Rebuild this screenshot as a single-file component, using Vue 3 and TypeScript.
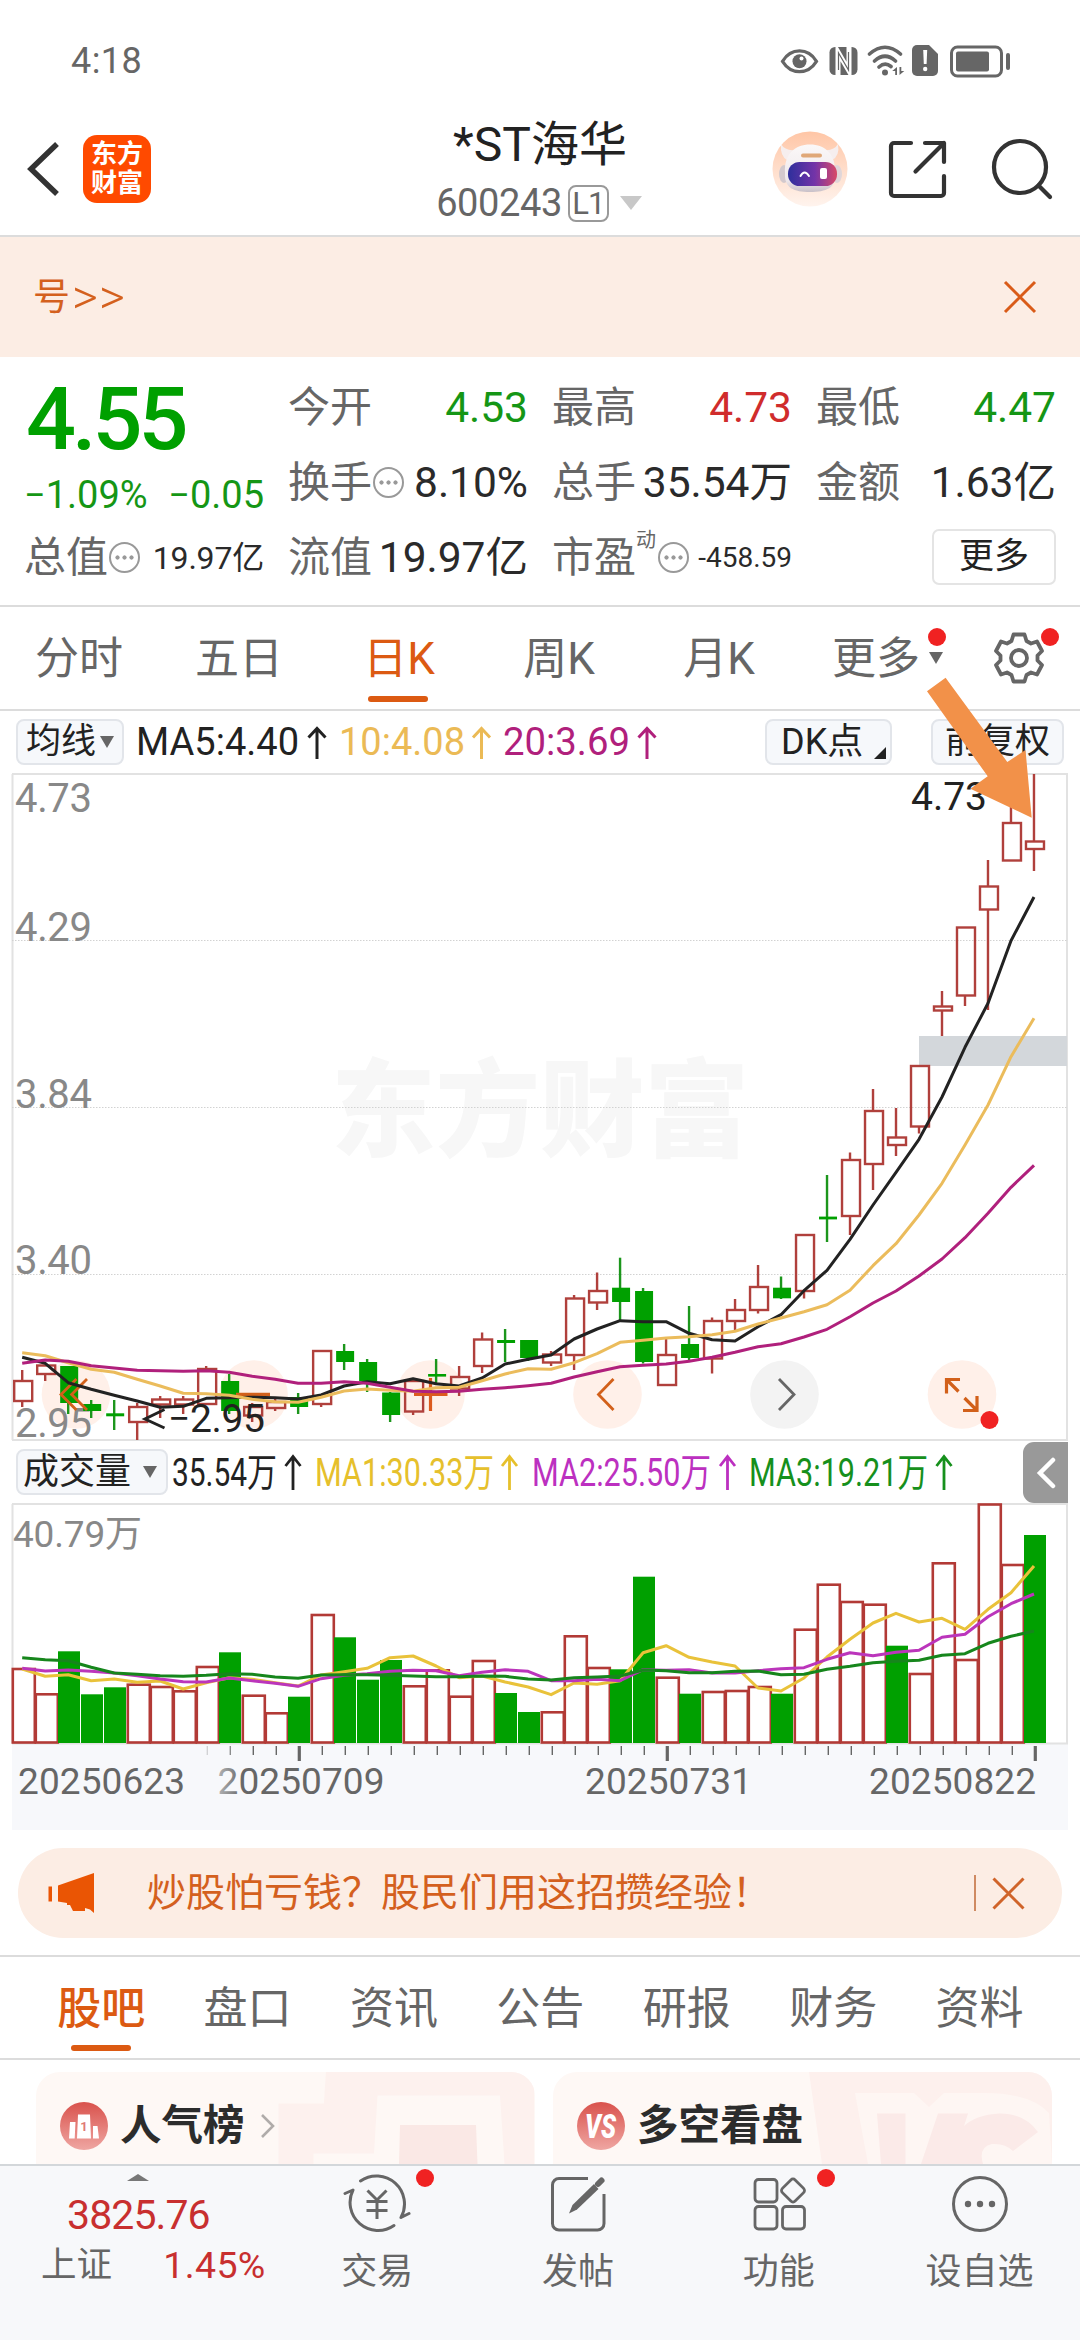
<script setup lang="ts">
type Candle = [kind: 'r' | 'g', high: number, top: number, bottom: number, low: number]

const PITCH = 22.995
const cx = (i: number): number => 22.2 + i * PITCH

const candles: Candle[] = [
  ['r', 1370, 1381, 1401, 1407], ['r', 1365, 1365.5, 1374, 1381], ['g', 1366, 1366, 1403, 1414],
  ['g', 1400, 1404, 1411, 1418], ['g', 1400, 1413.3, 1416.3, 1430], ['r', 1403, 1407, 1422, 1440],
  ['r', 1396, 1399.5, 1404.5, 1418], ['r', 1396, 1399.5, 1404.5, 1414], ['r', 1366, 1369, 1404, 1404],
  ['g', 1374, 1381, 1411, 1414], ['r', 1403, 1407, 1415.5, 1422], ['r', 1398, 1402, 1408, 1411],
  ['g', 1393, 1397, 1407, 1414], ['r', 1351, 1351, 1404, 1407], ['g', 1344, 1351, 1362, 1370],
  ['g', 1359, 1362, 1381, 1392], ['g', 1392, 1392.5, 1415, 1422], ['r', 1381, 1381, 1411.5, 1415],
  ['g', 1359, 1374, 1376.6, 1385], ['r', 1366, 1377, 1388.5, 1396], ['r', 1332.5, 1339.5, 1366, 1373],
  ['g', 1329, 1340, 1343, 1362], ['g', 1340, 1340, 1358, 1361], ['r', 1351, 1354.5, 1362.5, 1366],
  ['r', 1295, 1298.5, 1355, 1370], ['r', 1272.5, 1291, 1302.5, 1310], ['g', 1257.7, 1287.7, 1302, 1321],
  ['g', 1288, 1291, 1362, 1363.5], ['r', 1337, 1355, 1385, 1385], ['g', 1306, 1344, 1358, 1361],
  ['r', 1317.5, 1321, 1358.5, 1373.5], ['r', 1299, 1310, 1321, 1331], ['r', 1265, 1287, 1310, 1313.5],
  ['g', 1276.5, 1287.7, 1298.3, 1299], ['r', 1235, 1235, 1291, 1298.5], ['g', 1175, 1216.6, 1219.4, 1242],
  ['r', 1152.5, 1160, 1216, 1235], ['r', 1089, 1111, 1164, 1190], ['r', 1108, 1137.5, 1145, 1156],
  ['r', 1066, 1066, 1126.5, 1133.5], ['r', 991, 1006.5, 1010.5, 1036], ['r', 927.5, 927.5, 995.5, 1006],
  ['r', 860, 886.5, 909.5, 1010], ['r', 800, 823, 860.5, 860.5], ['r', 774, 841.5, 849, 871],
]

const ma5 = [1357.3, 1363.3, 1382.7, 1389.3, 1395.3, 1401, 1407.3, 1406.3, 1398.3, 1397.7, 1397.3, 1397.7, 1399, 1395, 1386, 1381.7, 1383.7, 1378.7, 1383.7, 1386, 1378, 1364, 1359.3, 1355, 1339, 1329, 1320.7, 1321.7, 1321.7, 1333.3, 1339.7, 1341, 1326.7, 1314.7, 1290.7, 1270.3, 1239.3, 1205, 1172.3, 1139.3, 1097, 1047.3, 1003.3, 940.7, 897]
const ma10 = [1352.7, 1355.7, 1362.7, 1369.3, 1372.3, 1379.3, 1386, 1393.3, 1393.7, 1395.3, 1399.3, 1401.7, 1402.3, 1397.3, 1391, 1389, 1390.3, 1391.3, 1387.7, 1387.3, 1380.7, 1374, 1368.7, 1369.3, 1362.7, 1353.7, 1342.3, 1340.3, 1338, 1336.7, 1334.7, 1331.3, 1324, 1318, 1311.7, 1304.7, 1290.3, 1265.7, 1243.7, 1215, 1183.3, 1145, 1105, 1056.7, 1018.3]
const ma20 = [1363.3, 1360, 1361.3, 1365.7, 1368, 1370.3, 1370.7, 1371.3, 1370.7, 1372.3, 1376.3, 1379.3, 1383.3, 1383.3, 1381.7, 1383.3, 1387.3, 1391.3, 1391.7, 1391.3, 1389.3, 1387.7, 1385.7, 1383.3, 1377, 1371.7, 1366.7, 1365.3, 1364, 1361.3, 1357.3, 1352.3, 1346.7, 1343.7, 1337, 1329.3, 1316.7, 1303, 1291, 1276, 1259, 1237.7, 1213.3, 1187.3, 1165.3]

const volumeTops = [1669, 1694.3, 1651.3, 1694.3, 1687.3, 1684.7, 1687, 1691.3, 1667, 1652.3, 1695.7, 1713.3, 1696.7, 1615, 1637.3, 1679.7, 1660, 1686.3, 1670.3, 1696.7, 1661, 1693, 1712, 1712.3, 1636.3, 1668, 1669.3, 1576.7, 1677.7, 1693.7, 1692, 1691, 1687, 1693.7, 1629.7, 1584.7, 1602, 1604.7, 1645.7, 1674, 1563.3, 1660, 1504.5, 1565, 1535]
const greenVolumes = new Set([2, 3, 4, 9, 12, 14, 15, 16, 21, 22, 26, 27, 29, 33, 38, 44])
const vma1 = [1669, 1676.3, 1674.7, 1680.7, 1679, 1682.3, 1681, 1689, 1682.7, 1677.7, 1679.3, 1682.7, 1686, 1675, 1671.7, 1668.3, 1657.7, 1656, 1666, 1677.7, 1676, 1682, 1687, 1694.7, 1683, 1684.3, 1680.7, 1652.7, 1645.7, 1657.3, 1662, 1666, 1688, 1691, 1678, 1657, 1639.3, 1623, 1613.3, 1622, 1618.3, 1629.3, 1609.3, 1592.7, 1566]
const vma2 = [1668.3, 1671, 1670, 1671.3, 1673, 1675.7, 1679, 1681.7, 1682, 1678, 1680.7, 1683.3, 1686.3, 1678.7, 1675.3, 1673.7, 1671.3, 1670.3, 1670.7, 1675.7, 1672.3, 1669.7, 1671.3, 1680.7, 1680.7, 1679.3, 1680.7, 1669.7, 1670.3, 1669.7, 1673, 1673, 1670.7, 1668.7, 1667.7, 1659.3, 1652.7, 1655.7, 1652.3, 1650.3, 1637.3, 1634.3, 1616.7, 1603.7, 1594]
const vma3 = [1657.7, 1659.7, 1660.7, 1667.3, 1673, 1674.3, 1675.7, 1676.3, 1675.3, 1673.7, 1674.3, 1677, 1678.3, 1675, 1674.7, 1674.7, 1675.3, 1676, 1676.7, 1676.7, 1676, 1676.3, 1679, 1680, 1677.7, 1677, 1676, 1670, 1670.7, 1672.7, 1672.7, 1671.3, 1671, 1674.7, 1674.3, 1669.3, 1666.3, 1662.7, 1661.3, 1660.3, 1655.3, 1653.7, 1643.3, 1636.3, 1631]

const line = (ys: number[]): string => ys.map((y, i) => `${cx(i).toFixed(1)},${y}`).join(' ')

const ticks = Array.from({ length: 37 }, (_, k) => k + 8).map((i) => ({
  x: 23.3 + i * 23,
  major: i === 12 || i === 28 || i === 44,
}))

const priceLabels = [
  { t: '4.73', y: 811.5 }, { t: '4.29', y: 940.5 }, { t: '3.84', y: 1107.5 },
  { t: '3.40', y: 1273.5 }, { t: '2.95', y: 1436.5 },
]
const dates = [
  { t: '20250623', x: 18 }, { t: '20250709', x: 217.5 }, { t: '20250731', x: 585 }, { t: '20250822', x: 869 },
]
const maLegend = [
  { t: 'MA5:4.40', x: 136, w: 163, a: 317, c: '#222' },
  { t: '10:4.08', x: 339, w: 126, a: 481.5, c: '#ebba55' },
  { t: '20:3.69', x: 503, w: 127, a: 647, c: '#b0207c' },
]
const volLegend = [
  { t: '35.54万', x: 172, w: 105, a: 293, c: '#222' },
  { t: 'MA1:30.33万', x: 315, w: 179, a: 509.5, c: '#e6c02c' },
  { t: 'MA2:25.50万', x: 532, w: 179, a: 727.5, c: '#bc30c0' },
  { t: 'MA3:19.21万', x: 749, w: 179, a: 944, c: '#16901c' },
]
const periods = ['分时', '五日', '日K', '周K', '月K']
const sections = ['股吧', '盘口', '资讯', '公告', '研报', '财务', '资料']
</script>

<template>
  <div class="app">
    <div class="status">
      <span class="clock">4:18</span>
      <svg class="status-icons" viewBox="776 40 240 42" width="240" height="42">
        <g fill="none" stroke="#666" stroke-width="3.2">
          <path d="M782.5 61.3C791 47.500 808 47.500 816.500 61.300C808 75 791 75 782.500 61.300Z" />
          <rect x="951.500" y="47" width="50" height="29" rx="6" stroke-width="3" />
          <g stroke-linecap="round" stroke-width="3.600">
            <path d="M869.500 54Q885 40.500 900.500 54M874.500 61Q885 51.500 895.500 61M879 67Q885 61.500 891 66.500" />
          </g>
        </g>
        <circle cx="799.500" cy="61.300" r="7" fill="#666" /><circle cx="801.500" cy="58.500" r="2" fill="#fff" />
        <rect x="829.500" y="47" width="28" height="28" rx="5.500" fill="#666" />
        <path d="M838 76V52L849 71V46" fill="none" stroke="#fff" stroke-width="5" />
        <path d="M838.500 70V53L848.500 70V52" fill="none" stroke="#666" stroke-width="1.200" />
        <circle cx="885" cy="72.500" r="3" fill="#666" />
        <path d="M897 67v8h-1.800v-4h-3zM899.500 75v-8h1.800v4h3z" fill="#666" />
        <path d="M917 45h12l9 9v17a5 5 0 0 1-5 5h-16a5 5 0 0 1-5-5V50a5 5 0 0 1 5-5z" fill="#666" />
        <path d="M923.200 50h4l-.6 14h-2.800z" fill="#fff" /><circle cx="925.200" cy="69" r="2.200" fill="#fff" />
        <rect x="956" y="51.500" width="33" height="20" rx="2" fill="#666" />
        <rect x="1006" y="53" width="4" height="17" rx="2" fill="#666" />
      </svg>
    </div>

    <header class="header">
      <div class="head-left">
        <svg width="34" height="58" viewBox="0 0 34 58"><path d="M31 4L5 29L31 54" fill="none" stroke="#333" stroke-width="5.500" /></svg>
        <div class="logo"><span>东方</span><span>财富</span></div>
      </div>
      <div class="head-title">
        <div class="name">*ST海华</div>
        <div class="code"><span class="code-num">600243</span><span class="level">L1</span><i class="tri"></i></div>
      </div>
      <div class="head-right">
        <svg width="76" height="76" viewBox="0 0 76 76">
          <defs>
            <linearGradient id="sky" x1="0" y1="0" x2="0" y2="1"><stop offset="0" stop-color="#ffc6a6" /><stop offset="1" stop-color="#fff4ee" /></linearGradient>
            <linearGradient id="visor" x1="0" y1="0" x2="1" y2="0"><stop offset="0" stop-color="#2e2f9c" /><stop offset=".55" stop-color="#7434a8" /><stop offset="1" stop-color="#d84a68" /></linearGradient>
            <linearGradient id="shell" x1="0" y1="0" x2="0" y2="1"><stop offset="0" stop-color="#fbf8f8" /><stop offset=".75" stop-color="#efe9ec" /><stop offset="1" stop-color="#c9c0c8" /></linearGradient>
          </defs>
          <circle cx="38" cy="38" r="37.500" fill="url(#sky)" />
          <path d="M9 13Q8 25 15 29L23 19Q13 20 9 13ZM66 13Q68 25 60 29L52 19Q62 20 66 13Z" fill="#f6eeee" />
          <ellipse cx="12" cy="43" rx="5" ry="9" fill="#d3c9cd" /><ellipse cx="65" cy="43" rx="5" ry="9" fill="#e0d6d9" />
          <path d="M13 42C12 23 23 13.500 38 13.500S64 23 63 42C65 57 54 61 38 61S12 57 13 42Z" fill="url(#shell)" />
          <rect x="29" y="22.500" width="21" height="4" rx="2" fill="#e0a878" />
          <rect x="16" y="31" width="49" height="24" rx="11.500" fill="url(#visor)" />
          <path d="M28.500 45Q32.500 38 37 45" fill="none" stroke="#fff" stroke-width="2" stroke-linecap="round" />
          <rect x="48" y="37" width="7" height="11" rx="2" fill="#fff" />
        </svg>
        <svg class="share" width="62" height="62" viewBox="0 0 62 62" fill="none" stroke="#333" stroke-width="4.200" stroke-linecap="round" stroke-linejoin="round">
          <path d="M25 5H8a3 3 0 0 0-3 3V55a3 3 0 0 0 3 3H55a3 3 0 0 0 3-3V38M39 5H58V24M58 5L29.500 33.500" />
        </svg>
        <svg class="search" width="64" height="64" viewBox="0 0 64 64" fill="none" stroke="#333" stroke-width="4.200" stroke-linecap="round">
          <circle cx="30" cy="30" r="26" /><path d="M48.500 48.500L60 60" />
        </svg>
      </div>
    </header>

    <div class="notice">
      <span>号<em>&gt;&gt;</em></span>
      <svg width="34" height="34" viewBox="0 0 34 34"><path d="M2 2L32 32M32 2L2 32" stroke="#d95b18" stroke-width="3" fill="none" /></svg>
    </div>

    <section class="quote">
      <div class="last">
        <div class="price">4.55</div>
        <div class="change"><span>−1.09%</span><span>−0.05</span></div>
      </div>
      <div class="cell"><label>今开</label><b class="down">4.53</b></div>
      <div class="cell"><label>最高</label><b class="up">4.73</b></div>
      <div class="cell"><label>最低</label><b class="down">4.47</b></div>
      <div class="cell"><label>换手<i class="more-dot"></i></label><b>8.10%</b></div>
      <div class="cell"><label>总手</label><b>35.54万</b></div>
      <div class="cell"><label>金额</label><b>1.63亿</b></div>
      <div class="cell"><label>总值<i class="more-dot"></i></label><b class="mid">19.97亿</b></div>
      <div class="cell"><label>流值</label><b>19.97亿</b></div>
      <div class="cell"><label>市盈<sup>动</sup><i class="more-dot"></i></label><b class="small">-458.59</b></div>
      <div class="cell end"><button class="more-btn">更多</button></div>
    </section>

    <nav class="periods">
      <div v-for="p in periods" :key="p" class="period" :class="{ on: p === '日K' }">{{ p }}</div>
      <div class="period last-period">更多<i class="dot"></i><i class="caret"></i></div>
      <div class="gear">
        <svg width="54" height="54" viewBox="-27 -27 54 54" fill="none" stroke="#666" stroke-width="3.800" stroke-linejoin="round">
          <path d="M-5.500 -23.500H5.500L7.500 -17L12 -14.500L18 -16.500L23 -7L18.500 -2.500V2.500L23 7L18 16.500L12 14.500L7.500 17L5.500 23.500H-5.500L-7.500 17L-12 14.500L-18 16.500L-23 7L-18.500 2.500V-2.500L-23 -7L-18 -16.500L-12 -14.500L-7.500 -17Z" />
          <circle r="8" />
        </svg>
        <i class="dot"></i>
      </div>
    </nav>

    <div class="legend">
      <div class="chip ma-chip">均线<i class="caret"></i></div>
      <svg class="legend-text" viewBox="124 711 641 62" width="641" height="62">
        <g v-for="l in maLegend" :key="l.t" :fill="l.c">
          <text :x="l.x" y="754.500" font-size="38" :textLength="l.w" lengthAdjust="spacingAndGlyphs">{{ l.t }}</text>
          <path :d="`M${l.a} 759V729M${l.a - 8.5} 737.500L${l.a} 728.500L${l.a + 8.5} 737.500`" fill="none" :stroke="l.c" stroke-width="3" />
        </g>
      </svg>
      <div class="chip dk-chip">DK点<i class="corner"></i></div>
      <div class="chip adj-chip">前复权</div>
    </div>

    <svg class="chart" viewBox="0 773 1080 668" width="1080" height="668">
      <text x="331" y="1148" class="mark" textLength="418" lengthAdjust="spacingAndGlyphs">东方财富</text>
      <g fill="none" stroke="#e2e2e2">
        <path d="M12.500 774V1440M1067 774V1440" stroke-width="2" /><path d="M12 774H1068M12 1440H1068" stroke-width="2" />
        <path d="M12 940.500H1067M12 1107.500H1067M12 1274.500H1067" stroke="#d2d2d2" stroke-dasharray="1.500 1.500" stroke-width="1" />
      </g>
      <rect x="919" y="1036" width="148" height="30" fill="#d3d7db" />
      <g fill="#fff0e9">
        <circle cx="76" cy="1394.500" r="34.300" /><circle cx="253.500" cy="1394.500" r="34.300" /><circle cx="430.500" cy="1394.500" r="34.300" />
        <circle cx="607.500" cy="1394.500" r="34.300" /><circle cx="962" cy="1394.500" r="34.300" />
        <circle cx="784.500" cy="1394.500" r="34.300" fill="#f3f3f3" />
      </g>
      <text v-for="p in priceLabels" :key="p.t" x="15" :y="p.y" class="axis" textLength="77">{{ p.t }}</text>
      <g v-for="(c, i) in candles" :key="i">
        <template v-if="c[0] === 'r'">
          <path :d="`M${cx(i)} ${c[1]}V${c[2]}M${cx(i)} ${c[3]}V${c[4]}`" stroke="#b0403c" stroke-width="2.400" />
          <rect :x="cx(i) - 8" :y="c[2]" width="18" :height="c[3] - c[2]" fill="none" stroke="#b0403c" stroke-width="2.400" />
        </template>
        <template v-else>
          <path :d="`M${cx(i)} ${c[1]}V${c[4]}`" stroke="#1c961c" stroke-width="2.400" />
          <rect :x="cx(i) - 8" :y="c[2]" width="18" :height="c[3] - c[2]" fill="#00a000" />
        </template>
      </g>
      <g fill="none" stroke="#d2601a" stroke-width="2.800">
        <path d="M76.400 1379L61 1394.500L76.400 1410M87 1379L71.600 1394.500L87 1410" />
        <path d="M236 1394.500H270" stroke-width="3.500" /><path d="M414 1394.500H447.500M430.500 1378V1411" stroke-width="3.200" stroke="#dc5a1e" />
        <path d="M613.500 1379L598.500 1394.500L613.500 1410" />
        <path d="M960 1379.500H946.500V1393.500M947 1380L958.500 1391.500M963 1410.500H977V1396M976.500 1410L964.500 1398" stroke-width="3.200" />
        <path d="M779 1379L794 1394.500L779 1410" stroke="#666" />
      </g>
      <g fill="none" stroke-width="3" stroke-linejoin="round">
        <polyline :points="line(ma5)" stroke="#222" />
        <polyline :points="line(ma10)" stroke="#ebbc5c" />
        <polyline :points="line(ma20)" stroke="#b0207c" />
      </g>
      <circle cx="989.500" cy="1420" r="9" fill="#f02222" />
      <text x="911" y="809.500" class="tag">4.73</text>
      <path d="M164.500 1409.500L145 1419L164.500 1428" fill="none" stroke="#222" stroke-width="3" />
      <text x="168" y="1432" class="tag" textLength="97">−2.95</text>
    </svg>

    <div class="legend vol-legend">
      <div class="chip vol-chip">成交量<i class="caret"></i></div>
      <svg class="legend-text" viewBox="168 1441 855 62" width="855" height="62">
        <g v-for="l in volLegend" :key="l.t" :fill="l.c">
          <text :x="l.x" y="1485.500" font-size="39" :textLength="l.w" lengthAdjust="spacingAndGlyphs">{{ l.t }}</text>
          <path :d="`M${l.a} 1490V1457M${l.a - 7.5} 1466L${l.a} 1456.500L${l.a + 7.5} 1466`" fill="none" :stroke="l.c" stroke-width="2.800" />
        </g>
      </svg>
      <div class="drawer"><svg width="20" height="32" viewBox="0 0 20 32"><path d="M17 3L4 16L17 29" fill="none" stroke="#fff" stroke-width="4.500" stroke-linecap="round" /></svg></div>
    </div>

    <svg class="chart" viewBox="0 1503 1080 327" width="1080" height="327">
      <defs>
        <linearGradient id="fade" x1="0" x2="1" y1="0" y2="0"><stop offset="0" stop-color="#f7f8fb" /><stop offset="1" stop-color="#f7f8fb" stop-opacity="0" /></linearGradient>
      </defs>
      <rect x="12" y="1744" width="1056" height="86" fill="#f7f8fb" />
      <path d="M12.500 1504V1743M1067 1504V1743M12 1504H1068M12 1743.500H1068" fill="none" stroke="#e2e2e2" stroke-width="2" />
      <text x="13" y="1547" class="axis vol-axis" textLength="129">40.79万</text>
      <template v-for="(t, i) in volumeTops" :key="i">
        <rect v-if="greenVolumes.has(i)" :x="12 + i * 23" :y="t" width="22" :height="1743 - t" fill="#00a000" />
        <rect v-else :x="12.800 + i * 23" :y="t" width="22" :height="1742.500 - t" fill="none" stroke="#b23a36" stroke-width="2.600" />
      </template>
      <g fill="none" stroke-width="3" stroke-linejoin="round">
        <polyline :points="line(vma1)" stroke="#e9c23a" />
        <polyline :points="line(vma2)" stroke="#bb35bb" />
        <polyline :points="line(vma3)" stroke="#16861c" />
      </g>
      <path v-for="k in ticks" :key="k.x" :d="`M${k.x} 1746V${k.major ? 1761 : 1755}`" stroke="#666" :stroke-width="k.major ? 3.2 : 1.4" />
      <text v-for="d in dates" :key="d.t" :x="d.x" y="1793.500" class="date" textLength="167">{{ d.t }}</text>
      <rect x="195" y="1746" width="48" height="60" fill="url(#fade)" />
    </svg>

    <div class="promo">
      <svg width="48" height="42" viewBox="0 0 48 42" fill="#ea5504"><path d="M47 1V41L43 37.500L38 36V39H26L23 33L20 33V31L11 29.500V13.500Z" /><rect x="1.500" y="14.500" width="3.500" height="15" /></svg>
      <span class="promo-text">炒股怕亏钱？股民们用这招攒经验！</span>
      <i class="bar"></i>
      <svg width="33" height="33" viewBox="0 0 33 33"><path d="M1.500 1.500L31.500 31.500M31.500 1.500L1.500 31.500" stroke="#d0642a" stroke-width="3" fill="none" /></svg>
    </div>

    <nav class="sections">
      <div v-for="(s, i) in sections" :key="s" class="section" :class="{ on: i === 0 }">{{ s }}</div>
    </nav>

    <div class="cards">
      <div class="card">
        <svg class="deco" width="498" height="92" viewBox="36.500 2072 498 92">
          <path d="M326.400 2072L324.400 2103.500H279V2164H534.500V2072Z" fill="#fdf1ee" />
          <path d="M314 2153.500H374.500L378 2095.500H500.500L505 2164H314Z" fill="#fef8f5" />
          <path d="M400.500 2125H476.500L478 2164H399.500Z" fill="#fae8e5" />
        </svg>
        <svg width="48" height="48" viewBox="0 0 48 48">
          <defs><linearGradient id="badge" x1="0" y1="0" x2="0" y2="1"><stop offset="0" stop-color="#d9524c" /><stop offset="1" stop-color="#efa6a2" /></linearGradient></defs>
          <circle cx="24" cy="24" r="24" fill="url(#badge)" />
          <path d="M10 20h5.500l-.8 16.500H9zM18 12.500h12l1 24H17zM33 24h4.500l1.500 12.500h-6z" fill="#fff" />
          <text x="24" y="29" text-anchor="middle" font-size="13" font-weight="700" fill="#e07a76">1</text>
        </svg>
        <strong>人气榜</strong>
        <svg class="chev" width="15" height="26" viewBox="0 0 15 26"><path d="M2 2L13 13L2 24" fill="none" stroke="#b0acaa" stroke-width="2.600" /></svg>
      </div>
      <div class="card">
        <svg class="deco" width="499" height="92" viewBox="553 2072 499 92">
          <path d="M809 2072H1052V2164H822Z" fill="#fdf0ed" />
          <path d="M855 2093H914L929 2107L944 2093H980Q1030 2092 1049 2113L1052 2164H868Z" fill="#fef6f3" />
          <path d="M877 2113.500H905.500V2164H881ZM938 2113.500H968L952 2164H921ZM950 2164Q950 2116 1000 2113.500Q1025 2113.500 1038 2132L1013 2151Q1005 2143 992 2144Q978 2147 983 2164Z" fill="#fbeae8" />
        </svg>
        <svg width="48" height="48" viewBox="0 0 48 48">
          <circle cx="24" cy="24" r="24" fill="url(#badge)" />
          <text x="8" y="36" font-size="33" font-weight="900" font-style="italic" fill="#fff" textLength="31" lengthAdjust="spacingAndGlyphs">VS</text>
        </svg>
        <strong>多空看盘</strong>
      </div>
    </div>

    <footer class="bottom">
      <div class="index">
        <i class="peak"></i>
        <div class="index-val">3825.76</div>
        <div class="index-row"><span>上证</span><span class="pct">1.45%</span></div>
      </div>
      <div class="act">
        <svg width="68" height="60" viewBox="-34 -30 68 60" fill="none" stroke="#666" stroke-width="3">
          <path d="M-16.500 -23A28 28 0 0 1 24 13.500L32 9.500M17 21.500A28 28 0 0 1 -24 -14L-32 -10.500" stroke-linecap="round" stroke-linejoin="round" />
          <path d="M-9.500 -13.500L0 -4L9.500 -13.500M0 -4V15M-10.500 -2.500H10.500M-10.500 6.500H10.500" />
        </svg>
        <span>交易</span><i class="dot"></i>
      </div>
      <div class="act">
        <svg width="60" height="60" viewBox="-30 -30 60 60" fill="none" stroke="#666" stroke-width="3">
          <path d="M10 -25.500H-19a6.500 6.500 0 0 0-6.500 6.500V19.500a6.500 6.500 0 0 0 6.500 6.500H19.500a6.500 6.500 0 0 0 6.500-6.500V-10" />
          <path d="M-9 9.500L-5.500 1L16 -20L20.500 -15L-1 5.500Z" fill="#666" stroke="none" />
          <path d="M20 -20L23.500 -23.500" stroke-width="6" stroke-linecap="round" />
        </svg>
        <span>发帖</span>
      </div>
      <div class="act">
        <svg width="60" height="60" viewBox="-30 -30 60 60" fill="none" stroke="#666" stroke-width="2.800">
          <rect x="-24" y="-24.500" width="22" height="22.500" rx="3.500" /><rect x="-24" y="2.500" width="22" height="22.500" rx="3.500" /><rect x="3.500" y="2.500" width="22" height="22.500" rx="3.500" />
          <rect x="-9" y="-9" width="18" height="18" rx="3" transform="translate(14 -13.500) rotate(45)" />
        </svg>
        <span>功能</span><i class="dot"></i>
      </div>
      <div class="act">
        <svg width="60" height="60" viewBox="-30 -30 60 60"><circle r="26.500" fill="none" stroke="#666" stroke-width="3" /><g fill="#666"><circle cx="-12" r="3.200" /><circle r="3.200" /><circle cx="12" r="3.200" /></g></svg>
        <span>设自选</span>
      </div>
    </footer>

    <svg class="pointer" width="106" height="142" viewBox="926 677 106 142"><path d="M945.600 677.700L1007.300 762L1025.500 750L1031.700 817.700L970.400 788.700L987.700 776.300L927 691.300Z" fill="#f29149" /></svg>
  </div>
</template>

<style>
html, body { margin: 0; background: #fff; }
</style>

<style scoped>
.app {
  position: relative;
  width: 1080px;
  height: 2340px;
  overflow: hidden;
  display: flex;
  flex-direction: column;
  background: #fff;
  color: #222;
  font-family: Roboto, "Noto Sans CJK SC", sans-serif;
}
.app > * { flex: none; box-sizing: border-box; }
svg { display: block; flex: none; }
i, em { font-style: normal; }
.chart { overflow: visible; }

.status { height: 123px; padding: 40px 64px 0 71px; display: flex; justify-content: space-between; align-items: flex-start; color: #666; }
.clock { font-size: 36px; line-height: 43px; letter-spacing: .4px; }

.header { height: 114px; border-bottom: 2px solid #dcdcdc; display: grid; grid-template-columns: 1fr auto 1fr; }
.head-left, .head-right { height: 92px; display: flex; align-items: center; }
.head-left { padding-left: 26px; }
.logo { width: 68px; height: 68px; margin-left: 23px; border-radius: 14px; background: #ff4a00; color: #fff; display: flex; flex-direction: column; align-items: center; justify-content: center; font-size: 26px; line-height: 29px; font-weight: 700; }
.head-title { display: flex; flex-direction: column; align-items: center; }
.name { font-size: 48px; line-height: 44px; height: 44px; }
.code { margin-top: 18px; height: 36px; display: flex; align-items: center; color: #666; font-size: 38px; line-height: 36px; }
.code-num { letter-spacing: -.4px; }
.level { width: 37px; height: 33px; line-height: 34px; margin-left: 6px; border: 2px solid #999; border-radius: 8px; font-size: 31px; text-align: center; letter-spacing: -1px; }
.tri { margin-left: 11px; margin-right: 2px; border: 11px solid transparent; border-top: 14px solid #c8c8c8; border-bottom: 0; }
.head-right { justify-content: flex-end; padding-right: 26px; }
.share { margin-left: 38px; }
.search { margin-left: 42px; }

.notice { height: 120px; background: #fcede4; color: #d4601e; padding: 0 43px 0 33px; display: flex; align-items: center; justify-content: space-between; font-size: 37px; line-height: 60px; }
.notice span { display: flex; margin-top: 2px; }
.notice em { font-size: 50px; margin-left: 2px; line-height: 58px; letter-spacing: 1px; font-weight: 300; }

.quote { height: 250px; padding: 13px 24px 0; border-bottom: 2px solid #dcdcdc; display: grid; grid-template-columns: repeat(4, 240px); grid-template-rows: repeat(3, 75px); column-gap: 24px; }
.last { grid-row: span 2; color: #00a000; }
.price { font-size: 88px; font-weight: 500; line-height: 98px; height: 96px; letter-spacing: -4px; padding-left: 2px; }
.change { display: flex; justify-content: space-between; font-size: 38px; line-height: 58px; color: #159615; }
.cell { display: flex; align-items: center; justify-content: space-between; white-space: nowrap; line-height: 60px; }
.cell label { display: flex; align-items: center; font-size: 42px; color: #666; }
.cell b { font-weight: 400; font-size: 42.5px; color: #2a2a2a; margin-left: -10px; }
.cell b.up { color: #d02c2c; }
.cell b.down { color: #159615; }
.cell b.mid { font-size: 32px; letter-spacing: -.2px; }
.cell b.small { font-size: 28px; }
.cell sup { font-size: 20px; line-height: 20px; margin-bottom: 36px; width: 21px; }
.more-dot { width: 27px; height: 27px; margin-left: 1px; border: 2px solid #999; border-radius: 50%; background: radial-gradient(circle at 6.500px 50%, #999 1.8px, transparent 2.4px), radial-gradient(circle at 13.500px 50%, #999 1.8px, transparent 2.4px), radial-gradient(circle at 20.500px 50%, #999 1.8px, transparent 2.4px); }
.cell.end { justify-content: flex-end; }
.more-btn { width: 124px; height: 56px; margin-top: -2px; padding: 0; border: 2px solid #e4e4e4; border-radius: 7px; background: #fff; color: #222; font: 35px/50px Roboto, "Noto Sans CJK SC", sans-serif; }

.periods { height: 104px; border-bottom: 2px solid #dcdcdc; display: flex; font-size: 44px; line-height: 105px; color: #666; }
.period { position: relative; width: 160px; text-align: center; }
.period:not(.last-period) { text-indent: -2px; }
.period.on, .section.on { color: #dc5a12; }
.period.on::after { content: ""; position: absolute; left: 48px; top: 89px; width: 60px; height: 6px; border-radius: 3px; background: #dc5a12; }
.last-period { width: 152px; }
.dot { position: absolute; width: 18px; height: 18px; border-radius: 50%; background: #f02222; }
.last-period .dot { left: 128px; top: 21px; }
.caret { border: 7.5px solid transparent; border-top: 12px solid #666; border-bottom: 0; }
.last-period .caret { position: absolute; left: 129px; top: 45px; }
.gear { position: relative; width: 128px; display: flex; align-items: center; padding-left: 40px; box-sizing: border-box; }
.gear .dot { left: 89px; top: 21px; }

.legend { height: 62px; display: flex; align-items: flex-start; padding-left: 16px; }
.chip { box-sizing: border-box; height: 46px; margin-top: 8px; border: 2px solid #e2e5ea; border-radius: 8px; background: #f6f8fb; font-size: 35px; line-height: 42px; white-space: nowrap; display: flex; align-items: center; }
.ma-chip { width: 108px; padding-left: 8px; gap: 4px; }
.dk-chip { width: 127px; padding-left: 14px; position: relative; font-size: 36px; }
.corner { position: absolute; right: 4px; bottom: 4px; border-left: 12px solid transparent; border-bottom: 12px solid #222; }
.adj-chip { width: 133px; margin-left: 39px; justify-content: center; }
.vol-chip { width: 152px; padding-left: 5px; font-size: 36px; gap: 12px; }
.drawer { width: 45px; height: 61px; margin-top: 1px; border-radius: 11px 0 0 11px; background: #999; display: flex; align-items: center; justify-content: center; }

.mark { font: 900 106px "Noto Sans CJK SC", sans-serif; fill: #f7f7f7; }
.axis { fill: #888; font-size: 40px; }
.vol-axis { font-size: 37px; }
.tag { fill: #222; font-size: 39px; }
.date { fill: #666; font-size: 37px; }

.promo { height: 90px; margin: 18px 18px 17px; border-radius: 45px; background: #fcede4; display: flex; align-items: center; padding: 0 37px 0 29px; }
.promo-text { margin-left: 52px; font-size: 39px; line-height: 86px; color: #d4601e; white-space: nowrap; }
.bar { margin-left: auto; margin-right: 16px; width: 2px; height: 36px; background: #cf8a62; }

.sections { height: 105px; border-top: 2px solid #dcdcdc; border-bottom: 2px solid #dcdcdc; display: flex; padding-left: 28px; font-size: 44px; line-height: 105px; color: #666; }
.section { position: relative; width: 146.4px; text-align: center; }
.section.on { font-weight: 500; }
.section.on::after { content: ""; position: absolute; left: 43px; top: 88px; width: 60px; height: 6px; border-radius: 3px; background: #dc5a12; }

.cards { height: 104px; padding: 12px 28px 0 36px; display: flex; justify-content: space-between; overflow: hidden; }
.card { position: relative; width: 499px; height: 130px; border-radius: 24px; overflow: hidden; background: #fef8f5; display: flex; align-items: flex-start; padding: 30px 0 0 24px; box-sizing: border-box; }
.card > * { position: relative; }
.card .deco { position: absolute; left: 0; top: 0; }
.card strong { margin-left: 12px; font-size: 41.5px; line-height: 47px; font-weight: 700; color: #2c2c2c; }
.card .chev { margin: 11px 0 0 15px; }

.bottom { height: 176px; border-top: 2px solid #d3d7da; background: #f7f8fa; display: flex; color: #666; }
.index { width: 277px; display: flex; flex-direction: column; align-items: center; }
.peak { margin-top: 8px; border: 11px solid transparent; border-bottom: 7px solid #777; border-top: 0; }
.index-val { margin-top: 11px; font-size: 41px; line-height: 46px; letter-spacing: -.9px; color: #c82f2f; }
.index-row { align-self: stretch; display: flex; justify-content: space-between; padding: 0 11px 0 41px; font-size: 35.5px; line-height: 50px; margin-top: 2px; }
.pct { font-size: 37.5px; letter-spacing: .4px; color: #c82f2f; }
.act { position: relative; width: 201px; display: flex; flex-direction: column; align-items: center; padding-top: 8px; }
.act span { font-size: 36px; line-height: 44px; margin-top: 16px; }
.act .dot { left: 139px; top: 3px; }
.pointer { position: absolute; left: 926px; top: 677px; }
</style>
